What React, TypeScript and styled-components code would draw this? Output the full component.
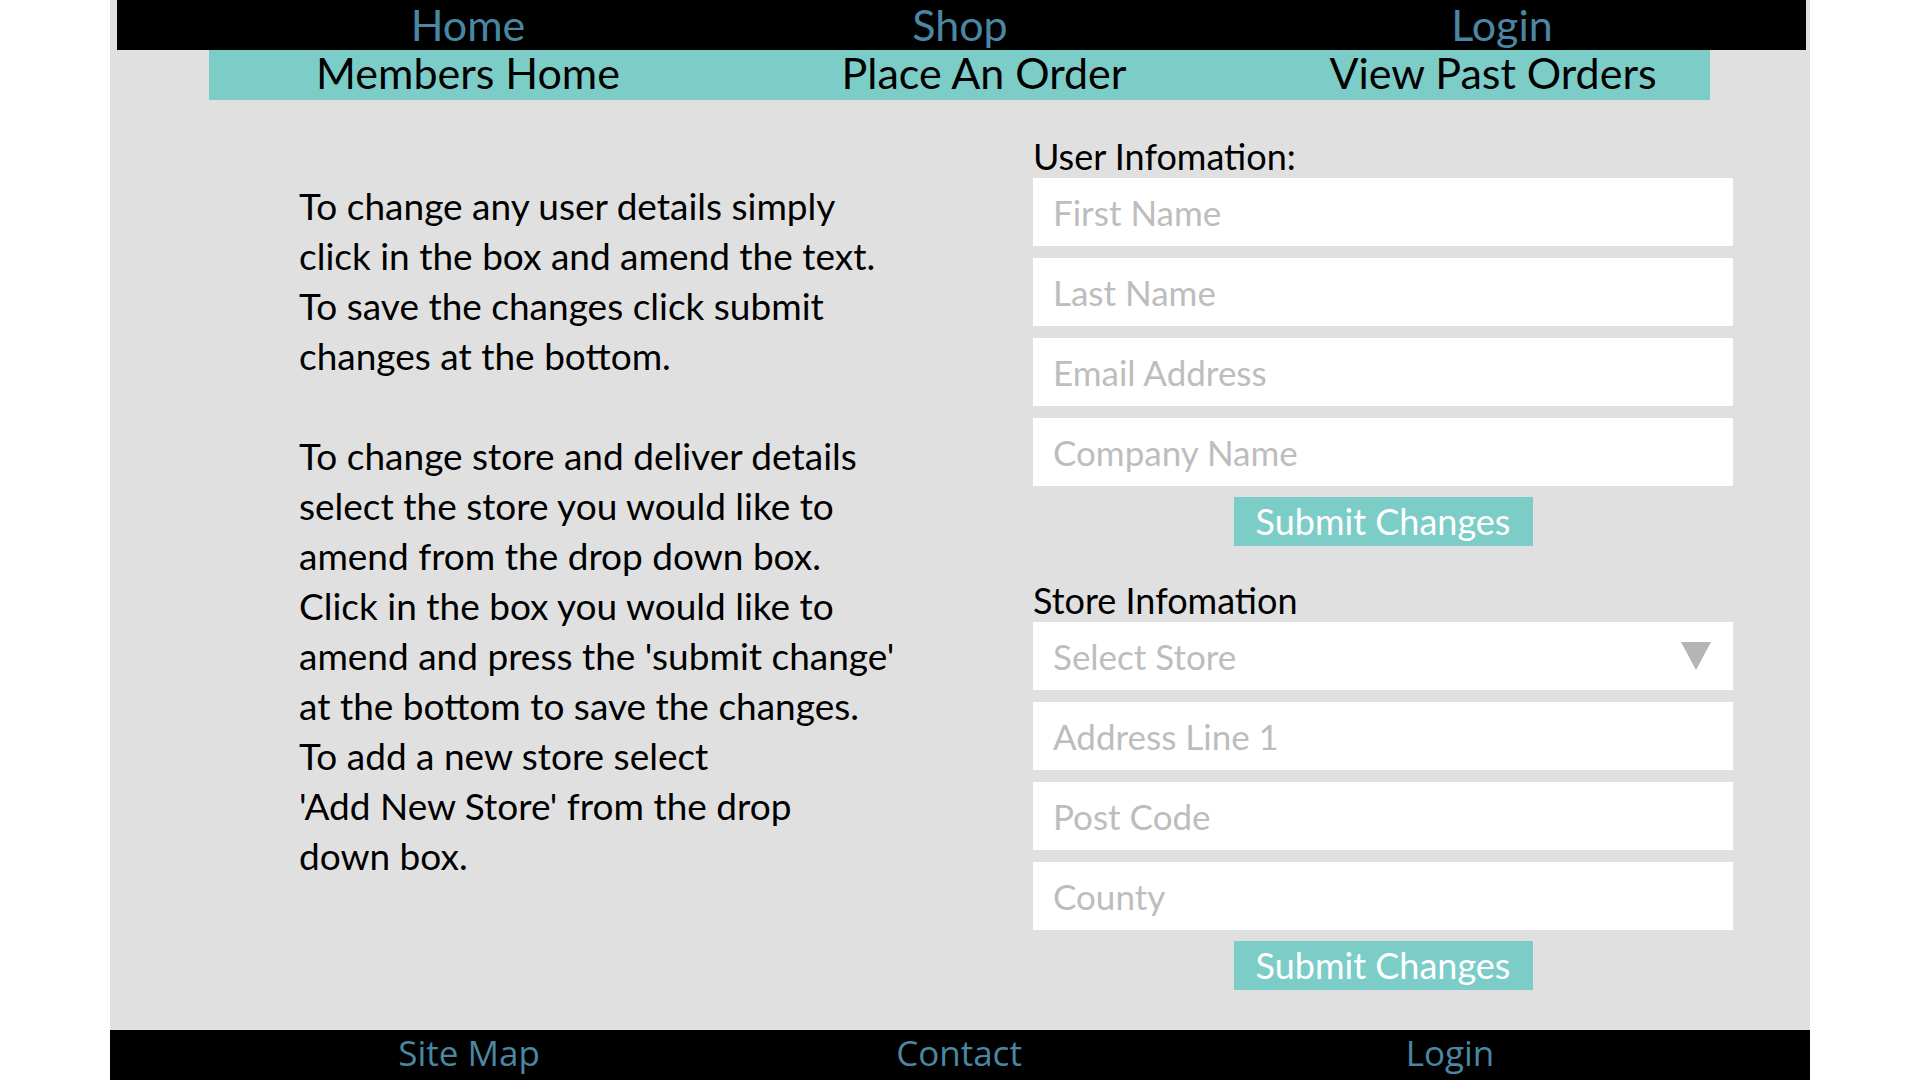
import React from "react";
import styled, { createGlobalStyle } from "styled-components";

const GlobalStyle = createGlobalStyle`
    html, body {
        margin: 0;
        padding: 0;
        background: #ffffff;
    }
    body {
        font-family: Lato, "Noto Sans", sans-serif;
    }
    * {
        box-sizing: border-box;
    }
`;

const Page = styled.div`
    width: 1700px;
    height: 1080px;
    margin-left: 110px;
    background-color: #e0e0e0;
    display: flex;
    flex-direction: column;
`;

const NavRow = styled.nav<{ $cols: string; $bg: string; $ml: number; $width: number }>`
    display: grid;
    grid-template-columns: ${(p) => p.$cols};
    background-color: ${(p) => p.$bg};
    margin-left: ${(p) => p.$ml}px;
    width: ${(p) => p.$width}px;
    height: 50px;
    flex-shrink: 0;
`;

const TopLink = styled.a`
    text-align: center;
    font-size: 43px;
    line-height: 50px;
    color: #4a87a3;
    text-decoration: none;
    white-space: nowrap;
`;

const SubLink = styled.a`
    text-align: center;
    font-size: 43px;
    line-height: 46px;
    color: #000000;
    text-decoration: none;
    white-space: nowrap;
`;

const Main = styled.main`
    flex: 1;
    display: grid;
    grid-template-columns: 1fr 700px;
    padding: 0 77px 0 189px;
`;

const Help = styled.div`
    padding-top: 81px;
`;

const HelpText = styled.p`
    margin: 0 0 50px 0;
    font-size: 37px;
    line-height: 50px;
    color: #000000;
    white-space: nowrap;
`;

const Forms = styled.div`
    padding-top: 36px;
    display: flex;
    flex-direction: column;
`;

const Label = styled.div<{ $top?: number }>`
    font-size: 36px;
    line-height: 40px;
    margin-top: ${(p) => p.$top ?? 0}px;
    margin-bottom: 2px;
    color: #000000;
`;

const Field = styled.div`
    height: 68px;
    margin-bottom: 12px;
    background-color: #ffffff;
    display: flex;
    align-items: center;
    justify-content: space-between;
    padding: 0 22px 0 20px;
    font-size: 35px;
    color: #bdbdbd;
`;

const Arrow = styled.span`
    width: 0;
    height: 0;
    border-left: 15px solid transparent;
    border-right: 15px solid transparent;
    border-top: 28px solid #b5b5b5;
`;

const SubmitButton = styled.button`
    align-self: center;
    width: 299px;
    height: 49px;
    margin-top: -1px;
    border: none;
    background-color: #7ccdc8;
    color: #ffffff;
    font-family: Lato, "Noto Sans", sans-serif;
    font-size: 36px;
    line-height: 49px;
    padding: 0;
`;

const FootLink = styled.a`
    text-align: center;
    font-family: "Open Sans", "Noto Sans", sans-serif;
    font-size: 35px;
    line-height: 46px;
    color: #4a87a3;
    text-decoration: none;
`;

const userFields = ["First Name", "Last Name", "Email Address", "Company Name"];
const storeFields = ["Address Line 1", "Post Code", "County"];

export default function App() {
    return (
        <>
            <GlobalStyle />
            <Page>
                <NavRow $cols="702px 282px 802px" $bg="#000000" $ml={7} $width={1689}>
                    <TopLink>Home</TopLink>
                    <TopLink>Shop</TopLink>
                    <TopLink>Login</TopLink>
                </NavRow>
                <NavRow $cols="518px 514px 504px" $bg="#7ccdc8" $ml={99} $width={1501}>
                    <SubLink>Members Home</SubLink>
                    <SubLink>Place An Order</SubLink>
                    <SubLink>View Past Orders</SubLink>
                </NavRow>
                <Main>
                    <Help>
                        <HelpText>
                            To change any user details simply
                            <br />
                            click in the box and amend the text.
                            <br />
                            To save the changes click submit
                            <br />
                            changes at the bottom.
                        </HelpText>
                        <HelpText>
                            To change store and deliver details
                            <br />
                            select the store you would like to
                            <br />
                            amend from the drop down box.
                            <br />
                            Click in the box you would like to
                            <br />
                            amend and press the 'submit change'
                            <br />
                            at the bottom to save the changes.
                            <br />
                            To add a new store select
                            <br />
                            'Add New Store' from the drop
                            <br />
                            down box.
                        </HelpText>
                    </Help>
                    <Forms>
                        <Label>User Infomation:</Label>
                        {userFields.map((f) => (
                            <Field key={f}>{f}</Field>
                        ))}
                        <SubmitButton>Submit Changes</SubmitButton>
                        <Label $top={34}>Store Infomation</Label>
                        <Field>
                            Select Store
                            <Arrow />
                        </Field>
                        {storeFields.map((f) => (
                            <Field key={f}>{f}</Field>
                        ))}
                        <SubmitButton>Submit Changes</SubmitButton>
                    </Forms>
                </Main>
                <NavRow $cols="718px 262px 1fr" $bg="#000000" $ml={0} $width={1700}>
                    <FootLink>Site Map</FootLink>
                    <FootLink>Contact</FootLink>
                    <FootLink>Login</FootLink>
                </NavRow>
            </Page>
        </>
    );
}
